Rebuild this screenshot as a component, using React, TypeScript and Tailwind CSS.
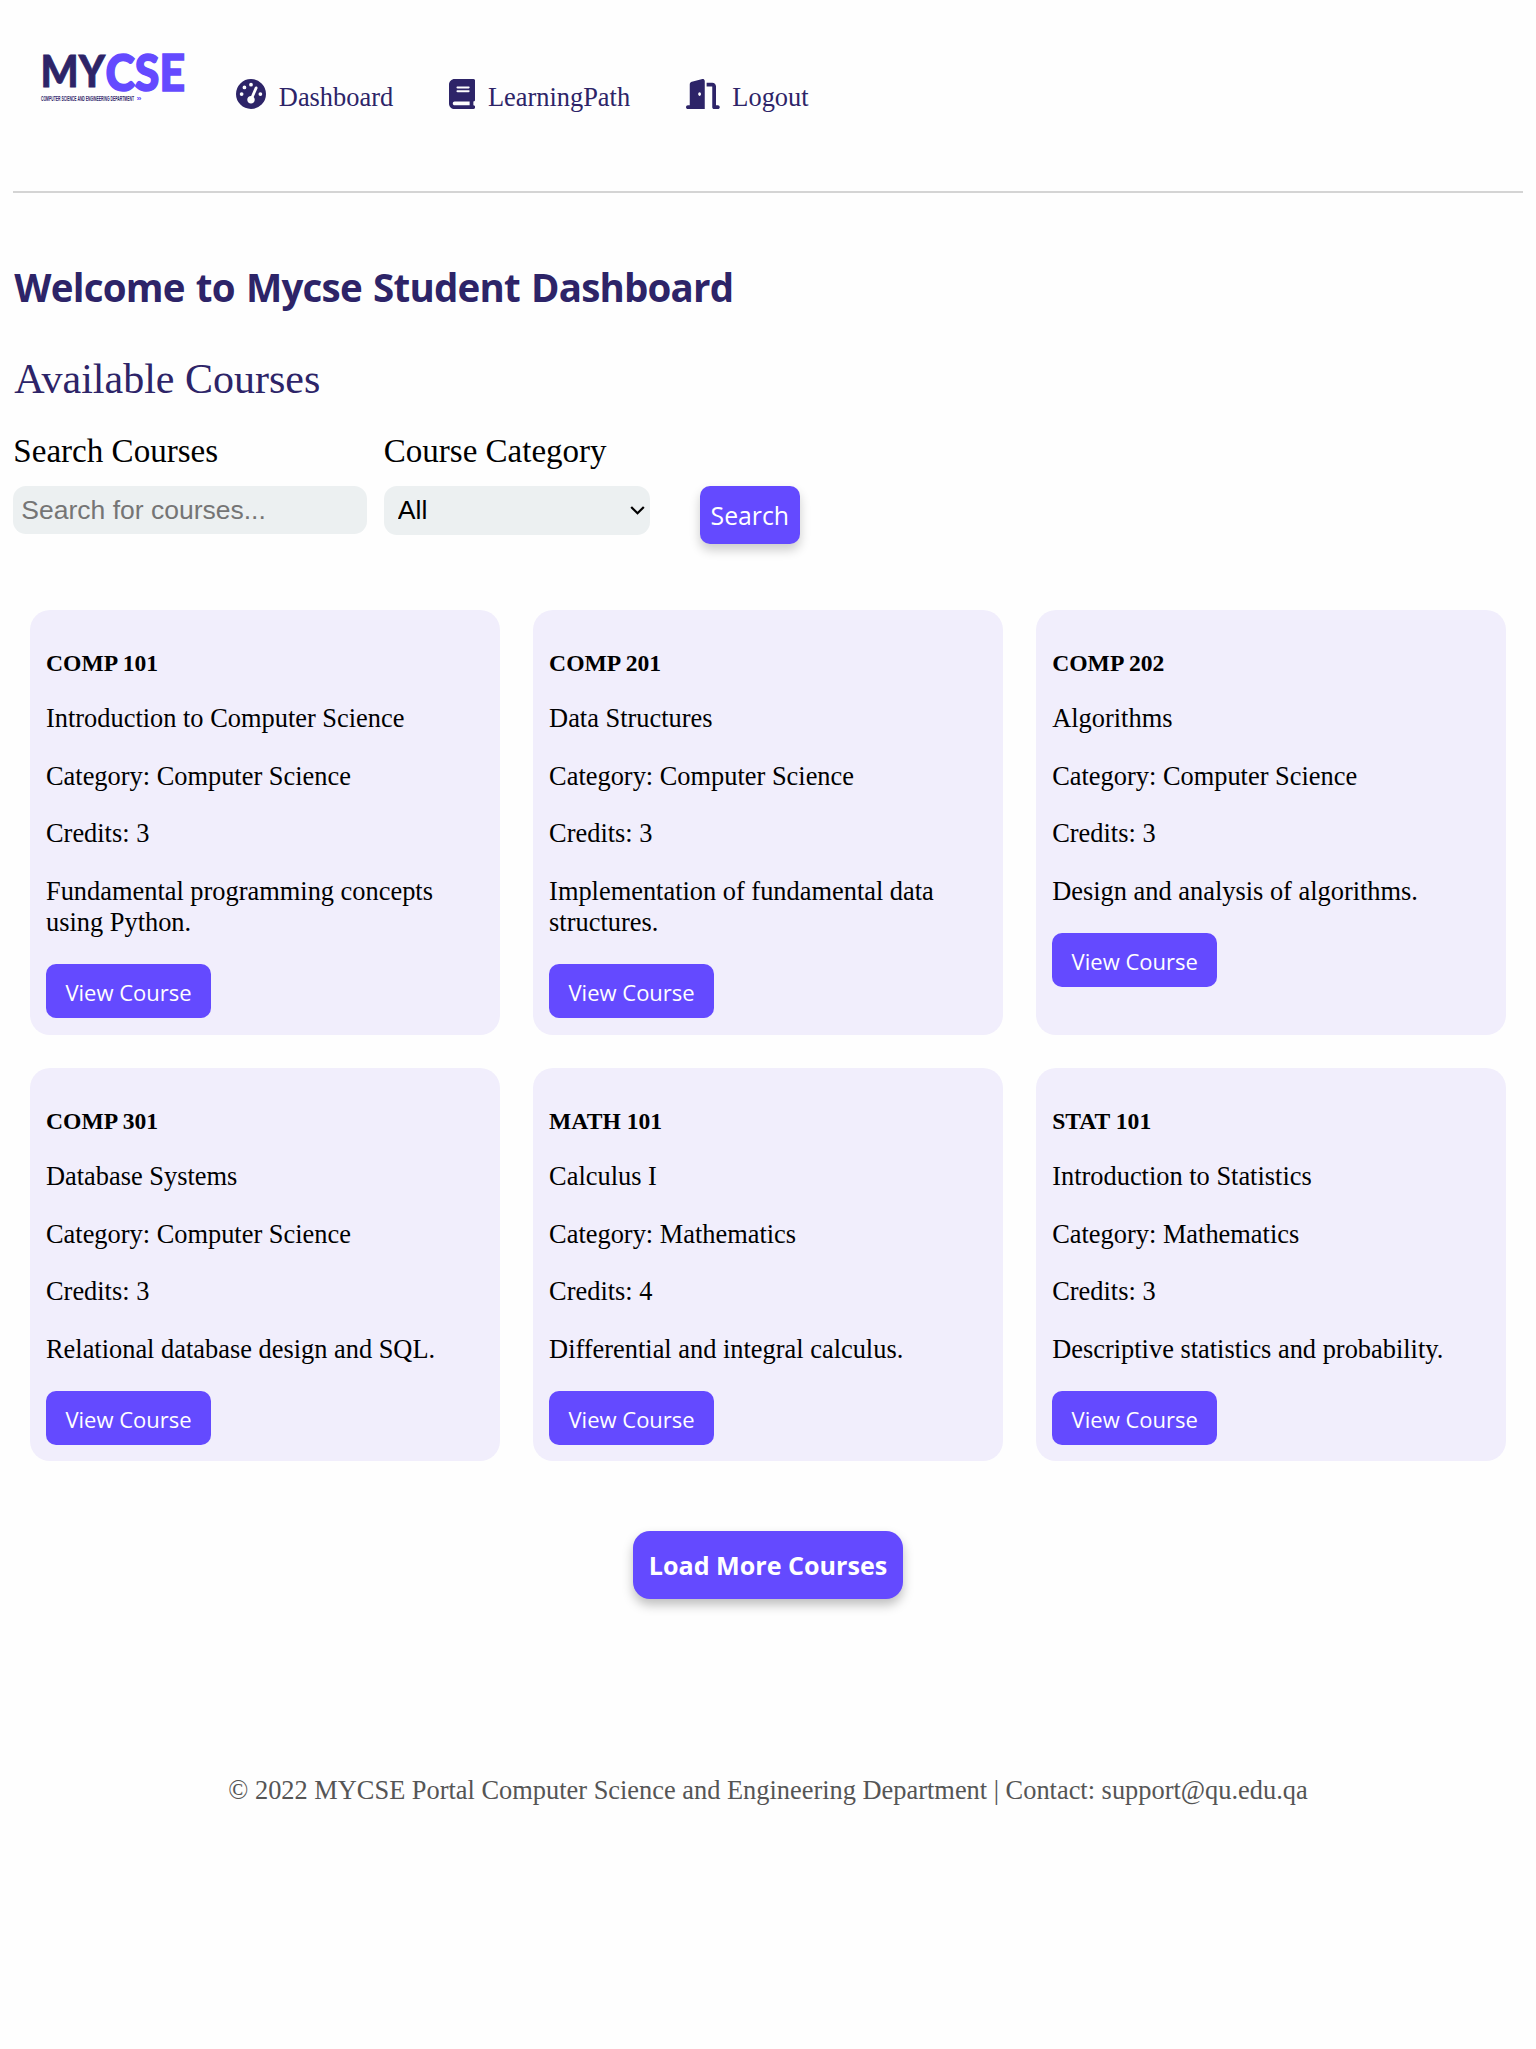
import { FaBook, FaDoorOpen, FaGaugeHigh } from "react-icons/fa6";
import type { IconType } from "react-icons";

type Course = {
  code: string;
  name: string;
  category: string;
  credits: number;
  description: string;
};

const courses: Course[] = [
  { code: "COMP 101", name: "Introduction to Computer Science", category: "Computer Science", credits: 3, description: "Fundamental programming concepts using Python." },
  { code: "COMP 201", name: "Data Structures", category: "Computer Science", credits: 3, description: "Implementation of fundamental data structures." },
  { code: "COMP 202", name: "Algorithms", category: "Computer Science", credits: 3, description: "Design and analysis of algorithms." },
  { code: "COMP 301", name: "Database Systems", category: "Computer Science", credits: 3, description: "Relational database design and SQL." },
  { code: "MATH 101", name: "Calculus I", category: "Mathematics", credits: 4, description: "Differential and integral calculus." },
  { code: "STAT 101", name: "Introduction to Statistics", category: "Mathematics", credits: 3, description: "Descriptive statistics and probability." },
];

const navItems: { label: string; Icon: IconType; size: string }[] = [
  { label: "Dashboard", Icon: FaGaugeHigh, size: "w-[30px]" },
  { label: "LearningPath", Icon: FaBook, size: "w-[26.25px]" },
  { label: "Logout", Icon: FaDoorOpen, size: "w-[33.75px]" },
];

function Logo() {
  return (
    <svg className="overflow-visible" width="150" height="75" viewBox="0 -12 150 75" role="img" aria-label="MYCSE">
      <g fontFamily="Lato, sans-serif" fontWeight="900">
        <text x="0.5" y="39" fontSize="43.5" textLength="64.5" lengthAdjust="spacingAndGlyphs" fill="#2d2468" stroke="#2d2468" strokeWidth="0.8">MY</text>
        <text x="65.5" y="42.5" fontSize="51" textLength="79.5" lengthAdjust="spacingAndGlyphs" fill="#644aff" stroke="#644aff" strokeWidth="1.6">CSE</text>
      </g>
      <g fontFamily="'Liberation Sans', sans-serif" fontWeight="700" fontSize="6.6">
        <text x="1" y="53" textLength="93" lengthAdjust="spacingAndGlyphs" fill="#2d2468">COMPUTER SCIENCE AND ENGINEERING DEPARTMENT</text>
        <text x="96.5" y="53" textLength="5" fontSize="8" lengthAdjust="spacingAndGlyphs" fill="#644aff">»</text>
      </g>
    </svg>
  );
}

function Header() {
  return (
    <header className="flex h-[178px] items-start pl-[27px] pt-[23px]">
      <Logo />
      <nav className="ml-[46px] mt-[43px] flex gap-[56px] text-[#2d2468]">
        {navItems.map(({ label, Icon, size }) => (
          <a key={label} href="#" className="flex items-start gap-[12.5px]">
            <Icon className={`h-[30px] shrink-0 ${size}`} />
            <span className="mt-[3px] text-[26.4px] leading-[31px]">{label}</span>
          </a>
        ))}
      </nav>
    </header>
  );
}

function SearchForm() {
  return (
    <form className="mt-[29px] flex items-end" onSubmit={(e) => e.preventDefault()}>
      <div className="mb-[10px] w-[354px]">
        <label htmlFor="search" className="block text-[33.1px] leading-[38px]">Search Courses</label>
        <input
          id="search"
          type="text"
          placeholder="Search for courses..."
          className="mt-4 block h-12 w-full rounded-[13px] bg-[#ecf0f1] px-2 font-['Liberation_Sans',sans-serif] text-[26.5px] outline-none placeholder:text-[#757575]"
        />
      </div>
      <div className="mb-[9px] ml-[16.5px] w-[266px]">
        <label htmlFor="category" className="block text-[33px] leading-[38px]">Course Category</label>
        <div className="relative mt-4">
          <select
            id="category"
            className="block h-[49px] w-full appearance-none rounded-[13px] bg-[#ecf0f1] pl-[14px] pt-px font-['Liberation_Sans',sans-serif] text-[26.6px] outline-none"
          >
            <option>All</option>
            <option>Computer Science</option>
            <option>Mathematics</option>
          </select>
          <svg className="pointer-events-none absolute right-[5px] top-[19px]" width="15" height="11" viewBox="0 0 15 11" fill="none" stroke="#000" strokeWidth="2.2">
            <path d="M1.2 2 7.5 8.3 13.8 2" />
          </svg>
        </div>
      </div>
      <button className="ml-[50px] h-[58px] w-[100px] rounded-[10px] bg-[#644aff] pt-px font-['Open_Sans',sans-serif] text-[24.8px] text-white shadow-[0_6px_11px_rgba(0,0,0,0.2)]">
        Search
      </button>
    </form>
  );
}

function CourseCard({ course }: { course: Course }) {
  return (
    <article className="flex flex-col items-start rounded-[20px] bg-[#f1eefc] px-4 py-[16.67px] text-[26.4px] leading-[31px]">
      <h4 className="mt-[23.2px] text-[23.6px] font-bold leading-[27px]">{course.code}</h4>
      <p className="mt-[26.5px]">{course.name}</p>
      <p className="mt-[26.5px]">Category: {course.category}</p>
      <p className="mt-[26.5px]">Credits: {course.credits}</p>
      <p className="mt-[26.5px]">{course.description}</p>
      <button className="mt-[26px] h-[54px] w-[165px] rounded-[10px] bg-[#644aff] pt-[3px] font-['Open_Sans',sans-serif] text-[22px] text-white">
        View Course
      </button>
    </article>
  );
}

export default function App() {
  return (
    <div className="min-h-[2049px] bg-[#fefefe] px-[13.33px] pt-[13px] font-['Liberation_Serif',serif] text-black">
      <Header />
      <hr className="h-0.5 border-0 bg-[#d4d4d4]" />
      <main>
        <h1 className="mt-[67px] pl-px font-['Open_Sans',sans-serif] text-[38.5px] font-bold leading-[54px] tracking-[-0.8px] text-[#2d2468] [word-spacing:2px]">
          Welcome to Mycse Student Dashboard
        </h1>
        <h2 className="mt-[41px] pl-px text-[42px] leading-[48px] text-[#2d2468]">Available Courses</h2>
        <SearchForm />
        <section className="mt-[66px] grid grid-cols-3 gap-[33.33px] px-[16.67px]">
          {courses.map((course) => (
            <CourseCard key={course.code} course={course} />
          ))}
        </section>
        <div className="mt-[70px] flex justify-center">
          <button className="h-[68px] w-[270px] rounded-[17px] bg-[#644aff] pt-px font-['Open_Sans',sans-serif] text-[25.1px] font-bold text-white shadow-[0_6px_11px_rgba(0,0,0,0.25)]">
            Load More Courses
          </button>
        </div>
      </main>
      <footer className="mt-[175.5px] text-center text-[26.4px] leading-[31px] text-[#555]">
        © 2022 MYCSE Portal Computer Science and Engineering Department | Contact: support@qu.edu.qa
      </footer>
    </div>
  );
}
